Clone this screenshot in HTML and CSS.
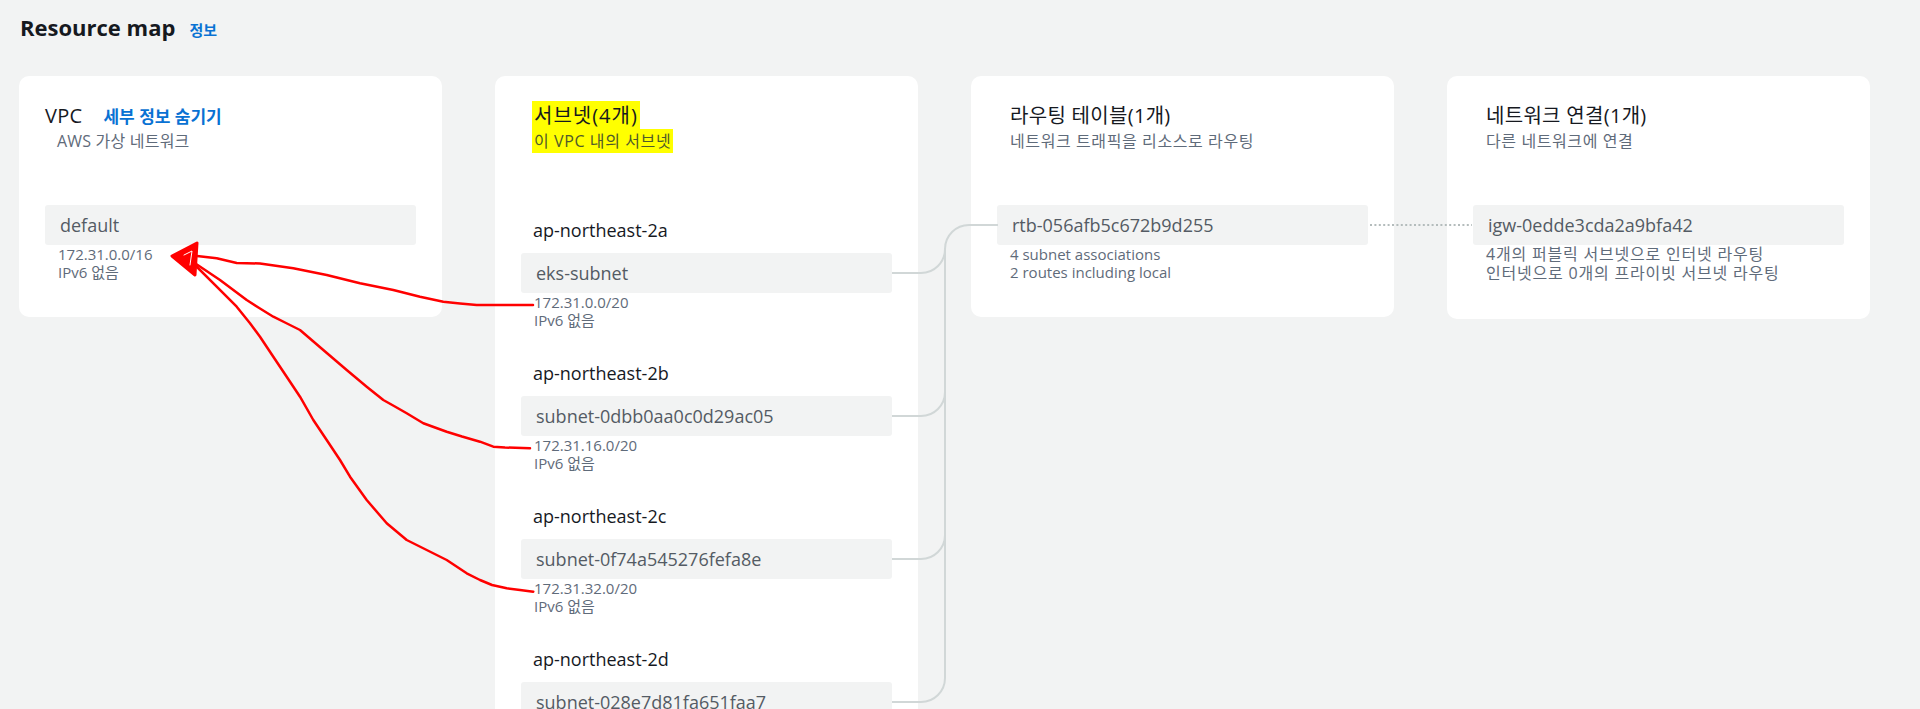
FILE: index.html
```html
<!DOCTYPE html>
<html lang="ko">
<head>
<meta charset="UTF-8">
<meta name="viewport" content="width=device-width, initial-scale=1.0">
<title>Resource map</title>
<link rel="stylesheet" href="styles.css">
</head>
<body>
<div class="page">
<div class="title-row">
<h2 class="title">Resource map</h2>
<a class="info" href="#">정보</a>
</div>
<div class="map">
<section class="card">
<div class="card-head vpc-head">
<div class="head-line">
<h3 class="card-title">VPC</h3>
<a class="toggle" href="#">세부 정보 숨기기</a>
</div>
<p class="card-sub">AWS 가상 네트워크</p>
</div>
<div class="node">default</div>
<div class="meta">
<div>172.31.0.0/16</div>
<div>IPv6 없음</div>
</div>
</section>
<section class="card">
<div class="card-head">
<h3 class="card-title"><span class="hl">서브넷(4개)</span></h3>
<p class="card-sub"><span class="hl">이 VPC 내의 서브넷</span></p>
</div>
<div class="az-list">
<div class="az">
<div class="az-name">ap-northeast-2a</div>
<div class="node">eks-subnet</div>
<div class="meta"><div>172.31.0.0/20</div><div>IPv6 없음</div></div>
</div>
<div class="az">
<div class="az-name">ap-northeast-2b</div>
<div class="node">subnet-0dbb0aa0c0d29ac05</div>
<div class="meta"><div>172.31.16.0/20</div><div>IPv6 없음</div></div>
</div>
<div class="az">
<div class="az-name">ap-northeast-2c</div>
<div class="node">subnet-0f74a545276fefa8e</div>
<div class="meta"><div>172.31.32.0/20</div><div>IPv6 없음</div></div>
</div>
<div class="az">
<div class="az-name">ap-northeast-2d</div>
<div class="node">subnet-028e7d81fa651faa7</div>
</div>
</div>
</section>
<section class="card">
<div class="card-head">
<h3 class="card-title">라우팅 테이블(1개)</h3>
<p class="card-sub">네트워크 트래픽을 리소스로 라우팅</p>
</div>
<div class="node">rtb-056afb5c672b9d255</div>
<div class="meta">
<div>4 subnet associations</div>
<div>2 routes including local</div>
</div>
</section>
<section class="card">
<div class="card-head">
<h3 class="card-title">네트워크 연결(1개)</h3>
<p class="card-sub">다른 네트워크에 연결</p>
</div>
<div class="node">igw-0edde3cda2a9bfa42</div>
<div class="meta ko">
<div>4개의 퍼블릭 서브넷으로 인터넷 라우팅</div>
<div>인터넷으로 0개의 프라이빗 서브넷 라우팅</div>
</div>
</section>
</div>
<!-- connectors + red annotation drawn on top -->
<svg class="overlay" width="1920" height="800" viewBox="0 0 1920 800">
<g class="links">
<path d="M998 225 H969 A24 24 0 0 0 945 249 V678 A24 24 0 0 1 921 702 H892"/>
<path d="M892 273 H921 A24 24 0 0 0 945 249"/>
<path d="M892 416 H921 A24 24 0 0 0 945 392"/>
<path d="M892 559 H921 A24 24 0 0 0 945 535"/>
</g>
<path class="dots" d="M1370 225 H1472"/>
<g class="marks">
<polyline points="533,305 500,305 476.7,305 460,303.5 443.3,301.7 420,296.7 393.3,290 360,283.3 326.7,275 293.3,268.3 260,263.5 236.7,263 216.7,258.3 197,256"/>
<polyline points="530,448.3 505,447.5 493.3,446.7 480,441.7 462,436.5 446.7,431.7 423.3,423.3 406.7,413.3 394,406 383.3,400 366.7,386.7 346.7,370 323.3,350 300,330 286,323 273.3,316.7 260,308.5 246.7,300 220,280 195,263.3"/>
<polyline points="533.3,591.7 520,590 506.7,588.3 492,585 480,580 466.7,573.3 446.7,560 426.7,550 406.7,540 386.7,523.3 366.7,500 350,476.7 340,460 326.7,440 313.3,420 300,396.7 286.7,376.7 273.3,356.7 260,336.7 250,323.3 236.7,306.7 216.7,286.7 195,265"/>
<polygon class="head" points="172,256 197,243 195,275"/>
<polyline class="scribble" points="184,255 192,251 190,265"/>
</g>
</svg>
</div>
</body>
</html>
```

FILE: styles.css
```css
* {
margin: 0;
padding: 0;
box-sizing: border-box;
font-family: "Open Sans", "Noto Sans CJK KR", sans-serif;
}
body {
background-color: #f2f3f3;
color: #16191f;
}
a {
text-decoration: none;
color: #0972d3;
font-weight: 700;
}
.page {
position: relative;
height: 100vh;
overflow: hidden;
padding: 12px 0 0 19px;
}
.title-row {
display: flex;
align-items: baseline;
gap: 14px;
height: 30px;
margin-bottom: 34px;
padding-left: 1px;
}
.title {
font-size: 22px;
font-weight: 700;
line-height: 30px;
}
.info {
font-size: 15px;
}
.map {
display: flex;
align-items: flex-start;
gap: 53px;
}
.card {
width: 423px;
flex-shrink: 0;
background: #fff;
border-radius: 10px;
padding: 26px 26px 36px;
}
.card-head {
padding-left: 13px;
margin-bottom: 53px;
}
.card-title {
font-size: 20px;
font-weight: 400;
line-height: 28px;
letter-spacing: 0.3px;
}
.card-sub {
font-size: 16px;
line-height: 22px;
color: #5f6b7a;
letter-spacing: 0.6px;
}
.vpc-head {
padding-left: 0;
}
.vpc-head .card-sub {
padding-left: 12px;
letter-spacing: 0.2px;
}
.head-line {
display: flex;
align-items: baseline;
gap: 21px;
}
.toggle {
font-size: 17px;
}
.node {
height: 40px;
display: flex;
align-items: center;
padding: 0 15px;
background: #f2f3f3;
border-radius: 3px;
font-size: 18px;
color: #545b64;
}
.meta {
padding-left: 13px;
font-size: 15px;
line-height: 18px;
color: #5f6b7a;
}
.meta.ko {
font-size: 16px;
line-height: 19px;
letter-spacing: 0.8px;
}
.az-list {
display: flex;
flex-direction: column;
gap: 31px;
padding-top: 12px;
}
.az-name {
padding-left: 12px;
margin-bottom: 10px;
font-size: 18px;
line-height: 26px;
}
.hl {
background: #ffff00;
padding: 1px 2px;
margin-left: -2px;
}
.card-title .hl {
letter-spacing: 1px;
}
.card-sub .hl {
color: #4f5a2a;
}
.overlay {
position: absolute;
top: 0;
left: 0;
pointer-events: none;
}
.links path {
fill: none;
stroke: #d1d7d7;
stroke-width: 2;
}
.dots {
fill: none;
stroke: #b4bcbc;
stroke-width: 2;
stroke-dasharray: 2 2.4;
}
.marks polyline {
fill: none;
stroke: #ff0000;
stroke-width: 2.5;
stroke-linejoin: round;
stroke-linecap: round;
}
.marks .head {
fill: #ff0000;
stroke: #ff0000;
stroke-width: 3;
stroke-linejoin: round;
}
.marks .scribble {
stroke: #fff;
stroke-width: 1;
}
```
